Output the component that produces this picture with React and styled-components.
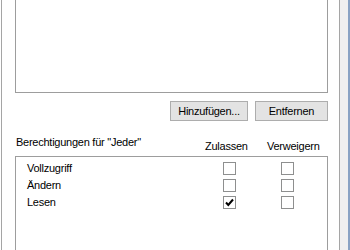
import React from "react"
import styled, { createGlobalStyle } from "styled-components"

const GlobalStyle = createGlobalStyle`
  html, body {
    margin: 0;
    padding: 0;
    background: #fff;
    overflow: hidden;
  }
  body {
    font-family: "Liberation Sans", Arial, sans-serif;
    font-size: 11px;
    letter-spacing: -0.25px;
    color: #000;
  }
`

const Window = styled.div`
  display: flex;
  height: 250px;
  width: 350px;
  overflow: hidden;
`

const TabPage = styled.div`
  box-sizing: border-box;
  width: 339px;
  margin-left: 1px;
  border-left: 1px solid #a5a5a5;
  border-right: 1px solid #a5a5a5;
  background: #fff;
  padding: 0 11px 0 13px;
  display: flex;
  flex-direction: column;
`

const Gutter = styled.div`
  flex: 1;
  background: #f0f0f0;
  border-right: 2px solid #8aa3c4;
`

// list views are cut off by the frame, so one edge is open
const ListBox = styled.div`
  box-sizing: border-box;
  border: 1px solid #9d9d9d;
  background: #fff;
  ${p => (p.top ? "height: 93px; flex-shrink: 0; border-top: none;" : "flex: 1; border-bottom: none;")}
  padding: ${p => (p.top ? "0" : "3px 11px 0 11px")};
`

const ButtonRow = styled.div`
  display: flex;
  justify-content: flex-end;
  gap: 7px;
  margin-top: 8px;
`

const Button = styled.button`
  box-sizing: border-box;
  width: ${p => p.w}px;
  height: 20px;
  padding: 0;
  border: 1px solid #adadad;
  background: #e3e3e3;
  font-family: inherit;
  font-size: 11px;
  letter-spacing: -0.25px;
  line-height: 13px;
  color: #000;
`

const HeaderRow = styled.div`
  display: grid;
  grid-template-columns: 1fr 62px 62px;
  margin: 15px -1px 3px 0;
  line-height: 13px;
`

const GroupLabel = styled.div`
  padding-left: 1px;
`

const ColHead = styled.div`
  padding-top: 4px;
`

const Row = styled.div`
  display: grid;
  grid-template-columns: 1fr 58px 58px;
  align-items: center;
  height: 17px;
  line-height: 13px;
`

const Name = styled.span``

const Box = styled.span`
  justify-self: center;
  box-sizing: border-box;
  width: 13px;
  height: 13px;
  border: 1px solid #8e8f8f;
  background: #fff;
  display: flex;
  align-items: center;
  justify-content: center;
`

const Check = ({ on }) => (
  <Box>
    {on && (
      <svg width="11" height="11" viewBox="0 0 11 11">
        <path d="M2 5.5 L4.3 8 L9 2.5" fill="none" stroke="#000" strokeWidth="2" />
      </svg>
    )}
  </Box>
)

const perms = [
  { name: "Vollzugriff", allow: false, deny: false },
  { name: "Ändern", allow: false, deny: false },
  { name: "Lesen", allow: true, deny: false },
]

export default function App() {
  return (
    <>
      <GlobalStyle />
      <Window>
        <TabPage>
          <ListBox top />
          <ButtonRow>
            <Button w={78}>Hinzufügen...</Button>
            <Button w={73}>Entfernen</Button>
          </ButtonRow>
          <HeaderRow>
            <GroupLabel>Berechtigungen für "Jeder"</GroupLabel>
            <ColHead>Zulassen</ColHead>
            <ColHead>Verweigern</ColHead>
          </HeaderRow>
          <ListBox>
            {perms.map(p => (
              <Row key={p.name}>
                <Name>{p.name}</Name>
                <Check on={p.allow} />
                <Check on={p.deny} />
              </Row>
            ))}
          </ListBox>
        </TabPage>
        <Gutter />
      </Window>
    </>
  )
}
